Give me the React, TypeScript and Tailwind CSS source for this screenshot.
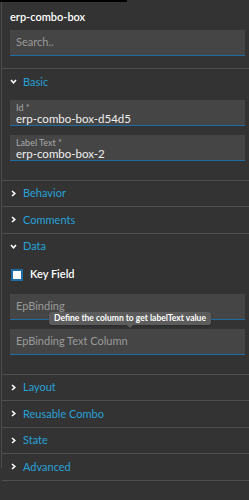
import React from "react";

const font = { fontFamily: "Lato, 'Noto Sans', sans-serif" };

function Chevron({ open }: { open: boolean }) {
  return (
    <svg width="7" height="7" viewBox="0 0 7 7" className="shrink-0">
      {open ? (
        <path d="M1 2 L3.5 4.8 L6 2" fill="none" stroke="#fff" strokeWidth="1.6" />
      ) : (
        <path d="M2 1 L4.8 3.5 L2 6" fill="none" stroke="#fff" strokeWidth="1.6" />
      )}
    </svg>
  );
}

function SectionHeader({ title, open }: { title: string; open?: boolean }) {
  return (
    <div className="flex h-[25.5px] items-center gap-[6px] pl-[8px]">
      <Chevron open={!!open} />
      <span className="text-[11px] text-[#27a1d9]">{title}</span>
    </div>
  );
}

function ValueField({ label, value }: { label: string; value: string }) {
  return (
    <div className="flex h-[26px] flex-col border-b border-[#1d6ca3] bg-[#454545] px-[6px] pt-[3px]">
      <span className="text-[9px] leading-[10px] text-[#a9a9a9]">{label}</span>
      <span className="text-[11.5px] leading-[12px] text-[#f0f0f0]">{value}</span>
    </div>
  );
}

function PlaceholderField({ text }: { text: string }) {
  return (
    <div className="flex h-[26px] items-center border-b border-[#1d6ca3] bg-[#454545] px-[6px]">
      <span className="text-[11px] text-[#9a9a9a]">{text}</span>
    </div>
  );
}

export default function App() {
  const collapsedTop = ["Behavior", "Comments"];
  const collapsedBottom = ["Layout", "Reusable Combo", "State", "Advanced"];

  return (
    <div className="relative flex h-[500px] w-[249px] overflow-hidden bg-[#333333]" style={font}>
      <div className="absolute left-0 top-0 h-[2px] w-[127px] bg-black" />
      <div className="ml-px h-[468px] w-px shrink-0 bg-[#4c4c4c]" />

      <div className="flex-1">
        <div className="pl-[8px] pr-[4px]">
          <p className="pt-[10px] text-[11px] font-semibold leading-[14px] text-white">erp-combo-box</p>
          <div className="mt-[6px]">
            <PlaceholderField text="Search.." />
          </div>
        </div>

        <div className="mt-[12px] border-t border-[#4f4f4f]">
          <SectionHeader title="Basic" open />
          <div className="space-y-[9px] pb-[19px] pl-[8px] pr-[4px] pt-[5px]">
            <ValueField label="Id *" value="erp-combo-box-d54d5" />
            <ValueField label="Label Text *" value="erp-combo-box-2" />
          </div>
        </div>

        {collapsedTop.map((t) => (
          <div key={t} className="border-t border-[#4f4f4f]">
            <SectionHeader title={t} />
          </div>
        ))}

        <div className="border-t border-[#4f4f4f]">
          <SectionHeader title="Data" open />
          <div className="pb-[19px] pl-[8px] pr-[4px] pt-[9.5px]">
            <label className="flex h-[12px] items-center gap-[7px] pl-[1px]">
              <span className="h-[12px] w-[12px] border-2 border-[#1d6ca3] bg-white" />
              <span className="text-[11px] font-semibold text-white">Key Field</span>
            </label>
            <div className="mt-[13px]">
              <PlaceholderField text="EpBinding" />
            </div>
            <div className="relative mt-[9px]">
              <div className="absolute left-[39px] top-[-17px] z-10 whitespace-nowrap rounded-[3px] bg-[#5c5c5c] px-[5px] py-[1px] text-[8.5px] font-bold leading-[11px] text-white shadow">
                Define the column to get labelText value
                <span className="absolute left-1/2 top-full -ml-[3px] h-0 w-0 border-x-[3px] border-t-[3px] border-x-transparent border-t-[#5c5c5c]" />
              </div>
              <PlaceholderField text="EpBinding Text Column" />
            </div>
          </div>
        </div>

        {collapsedBottom.map((t) => (
          <div key={t} className="border-t border-[#4f4f4f]">
            <SectionHeader title={t} />
          </div>
        ))}
        <div className="border-t border-[#4f4f4f]" />
      </div>
    </div>
  );
}
